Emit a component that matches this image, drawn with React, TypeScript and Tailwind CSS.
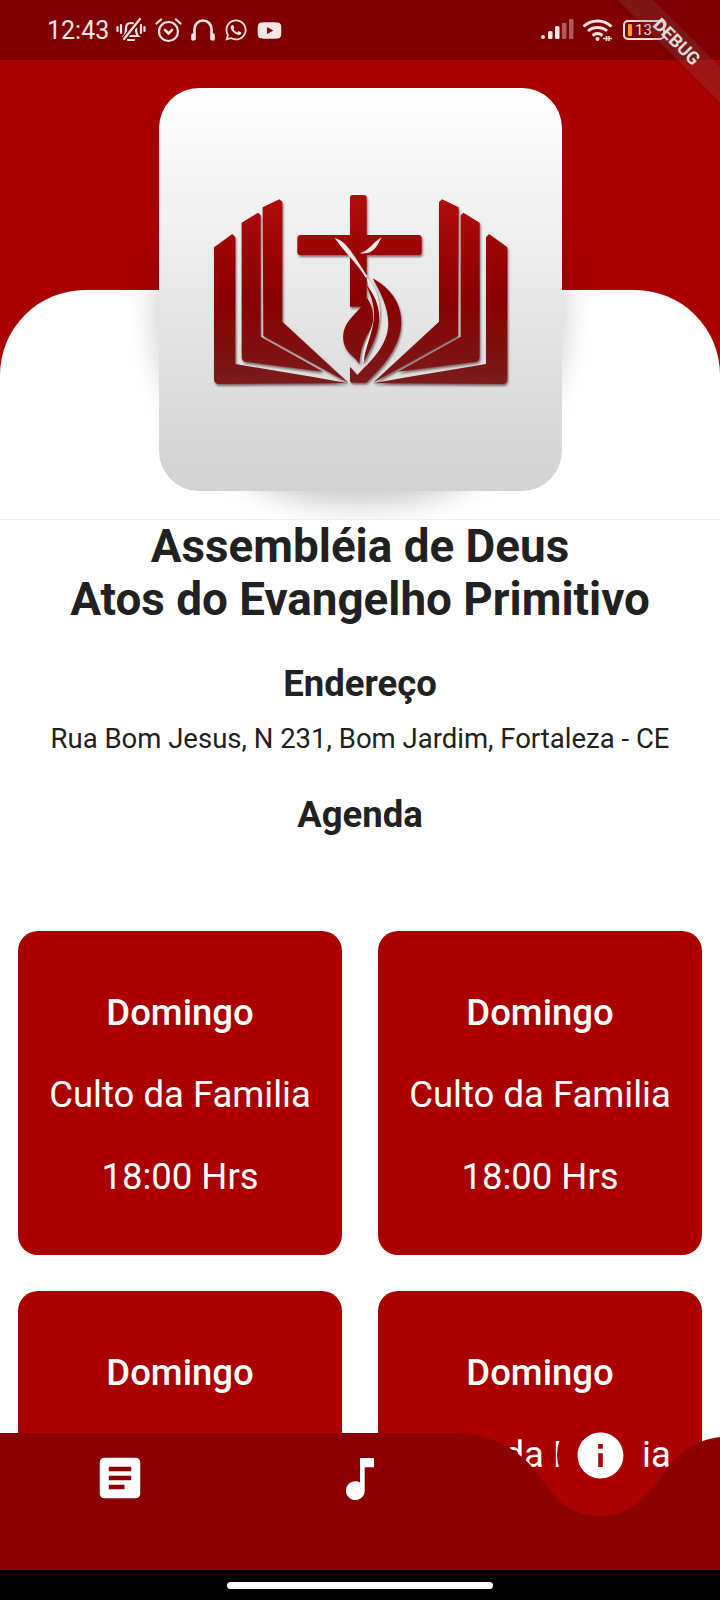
import { FaWhatsapp, FaYoutube } from 'react-icons/fa';
import { MdArticle, MdInfo, MdMusicNote } from 'react-icons/md';

const StatusIcons = () => (
    <div className="flex items-center gap-[9px] text-[#f6e6e6]">
        {/* muted bell */}
        <svg width="30" height="26" viewBox="0 0 30 26" fill="none" stroke="currentColor" strokeWidth="2.2" strokeLinecap="round">
            <path d="M8 19c2-2 2-4 2-8 0-3 2-5 5-5s5 2 5 5c0 4 0 6 2 8z" />
            <path d="M12 23h6" />
            <path d="M5 8v8M1.500 10v4M25 8v8M28.500 10v4" />
            <path d="M7 23L24 3" stroke="#800000" strokeWidth="5" />
            <path d="M8 22L24 2" />
        </svg>
        {/* alarm */}
        <svg width="27" height="26" viewBox="0 0 27 26" fill="none" stroke="currentColor" strokeWidth="2.2" strokeLinecap="round">
            <circle cx="13.500" cy="14.500" r="9.500" />
            <path d="M1.500 6.500L6 2.500M25.500 6.500L21 2.500" />
            <path d="M10 13l3.500 3.500L17 13" strokeWidth="2.600" />
        </svg>
        {/* headphones */}
        <svg width="24" height="24" viewBox="0 0 24 24" fill="none" stroke="currentColor" strokeWidth="2.600" strokeLinecap="round">
            <path d="M3.500 21V11a8.500 8.500 0 0 1 17 0v10" />
            <path d="M2 17v4M22 17v4" strokeWidth="3.600" />
        </svg>
        <FaWhatsapp size={24} />
        <FaYoutube size={25} />
    </div>
);

const SystemIcons = () => (
    <div className="flex items-center text-[#f6e6e6]">
        <svg width="34" height="22" viewBox="0 0 34 22" fill="currentColor">
            <rect x="1" y="16" width="4" height="4" rx="2" />
            <rect x="8" y="12" width="4.500" height="8" rx="1.500" />
            <rect x="15" y="7" width="4.500" height="13" rx="1.500" />
            <rect x="22" y="4" width="4.500" height="16" rx="1" opacity="0.4" />
            <rect x="29" y="0" width="4.500" height="20" rx="1" opacity="0.4" />
        </svg>
        <svg width="32" height="24" viewBox="0 0 32 24" fill="none" stroke="currentColor" strokeWidth="3" className="ml-[8px]">
            <path d="M1.500 8.500C9 1 22 1 29.500 8.500" />
            <path d="M6 13c5-4.700 14-4.700 19 0" />
            <path d="M10.500 17.500c3-2.300 7-2.300 10 0" />
            <circle cx="15.500" cy="21" r="2" fill="currentColor" stroke="none" />
            <path d="M21 20.500h9M24.500 18v5M27 18v5" strokeWidth="1.600" />
        </svg>
        <div className="ml-[9px] flex h-[20px] w-[42px] items-center rounded-[5px] border-2 border-[#f6e6e6] pl-[3px]">
            <div className="h-[12px] w-[4px] rounded-[1px] bg-[#f5a623]" />
            <span className="ml-[3px] text-[15px] leading-none text-[#f6e6e6]">13</span>
        </div>
    </div>
);

const DebugBanner = () => (
    <div className="absolute left-[577px] top-[29px] flex h-[25px] w-[200px] rotate-45 items-center justify-center bg-[#77585840] text-[18px] font-bold text-[#e3dcdc] shadow-[0_2px_4px_rgba(0,0,0,0.12)]">
        DEBUG
    </div>
);

const Logo = () => (
    <svg width="320" height="210" viewBox="0 0 960 630" className="drop-shadow-[1px_2px_1px_rgba(60,20,20,0.6)]">
        <defs>
            <linearGradient id="logoRed" gradientUnits="userSpaceOnUse" x1="0" y1="15" x2="0" y2="585">
                <stop offset="0" stopColor="#b20c0c" />
                <stop offset="0.55" stopColor="#880000" />
                <stop offset="1" stopColor="#7a1c1c" />
            </linearGradient>
        </defs>
        <g fill="url(#logoRed)">
            <path d="M42 172L97 132L106 142V522L335 560L445 580L55 582Q42 580 42 568Z" />
            <path d="M125 98L174 68L182 76V440L370 545L135 515Q125 512 125 500Z" />
            <path d="M188 52L238 28L247 36V395L445 578L190 438Z" />
            <g transform="translate(964 0) scale(-1 1)">
                <path d="M42 172L97 132L106 142V522L335 560L445 580L55 582Q42 580 42 568Z" />
                <path d="M125 98L174 68L182 76V440L370 545L135 515Q125 512 125 500Z" />
                <path d="M188 52L238 28L247 36V395L445 578L190 438Z" />
            </g>
            <path d="M458 15H492Q500 15 500 23V135H655Q665 135 665 145V185Q665 195 655 195H500V350H450V195H302Q292 195 292 185V145Q292 135 302 135H450V23Q450 15 458 15Z" />
        </g>
        {/* dove and flame */}
        <path d="M412 150C440 160 470 215 500 262C480 225 440 190 412 150Z" fill="#ececec" stroke="#ececec" strokeWidth="6" />
        <path d="M480 190C510 180 515 160 545 142C530 170 520 195 480 190Z" fill="#ececec" />
        <path d="M500 262C540 300 550 370 530 430C520 470 500 500 488 520C480 470 525 420 520 365C518 320 505 295 500 262Z" fill="#ececec" />
        <g fill="url(#logoRed)">
            <path d="M502 325C475 372 425 392 430 450C434 490 468 500 478 522C480 480 492 450 510 420C525 392 522 358 502 325Z" />
            <path d="M518 265C578 298 612 350 602 420C590 482 550 530 498 578H458Q450 578 450 570V530L472 555C505 520 565 470 565 400C565 350 540 305 518 265Z" />
            <path d="M497 282C530 320 548 370 532 425C522 462 505 490 492 515C492 480 520 430 522 375C522 338 510 310 497 282Z" />
        </g>
    </svg>
);

const AgendaCard = () => (
    <div className="flex h-[324px] flex-col items-center rounded-[20px] bg-[#aa0000] pt-[57px] text-white">
        <span className="text-[36.500px] leading-[50px] font-medium">Domingo</span>
        <span className="mt-[32px] text-[36.500px] leading-[50px]">Culto da Familia</span>
        <span className="mt-[32px] text-[36.500px] leading-[50px]">18:00 Hrs</span>
    </div>
);

const BottomNav = () => (
    <div className="absolute inset-x-0 top-[1432px] h-[138px]">
        <svg width="720" height="138" viewBox="0 0 720 138" className="absolute inset-0">
            <path d="M0 1H450C490 1 515 15 535 38C555 68 570 84 600 84C632 84 645 65 661 45C675 22 695 8 720 5V138H0Z" fill="#8b0000" />
        </svg>
        <div className="relative grid grid-cols-3 text-white">
            <div className="flex justify-center pt-[19px]"><MdArticle size={54} /></div>
            <div className="flex justify-center pt-[19px]"><MdMusicNote size={56} /></div>
            <div className="flex justify-center">
                <div className="-mt-[20px] flex h-[86px] w-[86px] items-center justify-center rounded-full bg-[#aa0000]">
                    <MdInfo size={55} />
                </div>
            </div>
        </div>
    </div>
);

export default function App() {
    return (
        <div className="relative h-[1600px] w-[720px] overflow-hidden bg-white [font-family:Roboto,sans-serif] text-[#212121]">
            <div className="flex h-[60px] items-center justify-between bg-[#800000] pl-[47px] pr-[55px]">
                <div className="flex items-center gap-[7px]">
                    <span className="text-[25px] leading-none text-[#f6e6e6]">12:43</span>
                    <StatusIcons />
                </div>
                <SystemIcons />
            </div>

            <div className="relative h-[460px] overflow-hidden border-b border-[#eeeeee] bg-[#aa0000]">
                <div className="absolute inset-x-0 top-[230px] bottom-0 rounded-t-[85px] bg-white" />
                {/* soft round shadow behind the square logo */}
                <div className="absolute left-[155px] top-[65px] h-[380px] w-[410px] rounded-full bg-black/20 blur-[14px]" />
                <div className="absolute left-[159px] top-[28px] h-[403px] w-[403px] rounded-[40px] bg-gradient-to-b from-white to-[#d2d2d2] pl-[41px] pt-[102px]">
                    <Logo />
                </div>
            </div>

            <div className="flex flex-col items-center">
                <h1 className="text-center text-[45.800px] leading-[53px] font-bold">
                    Assembléia de Deus
                    <br />
                    Atos do Evangelho Primitivo
                </h1>
                <h2 className="mt-[36px] text-[36.500px] leading-[44px] font-bold">Endereço</h2>
                <p className="mt-[15px] text-[27.500px] leading-[36px]">Rua Bom Jesus, N 231, Bom Jardim, Fortaleza - CE</p>
                <h2 className="mt-[36px] text-[36.500px] leading-[44px] font-bold">Agenda</h2>
            </div>

            <div className="mt-[94px] grid grid-cols-2 gap-x-[36px] gap-y-[36px] px-[18px]">
                <AgendaCard />
                <AgendaCard />
                <AgendaCard />
                <AgendaCard />
            </div>

            <BottomNav />
            <div className="absolute inset-x-0 top-[1570px] flex h-[30px] justify-center bg-black pt-[12px]">
                <div className="h-[7px] w-[266px] rounded-full bg-white" />
            </div>
            <DebugBanner />
        </div>
    );
}
